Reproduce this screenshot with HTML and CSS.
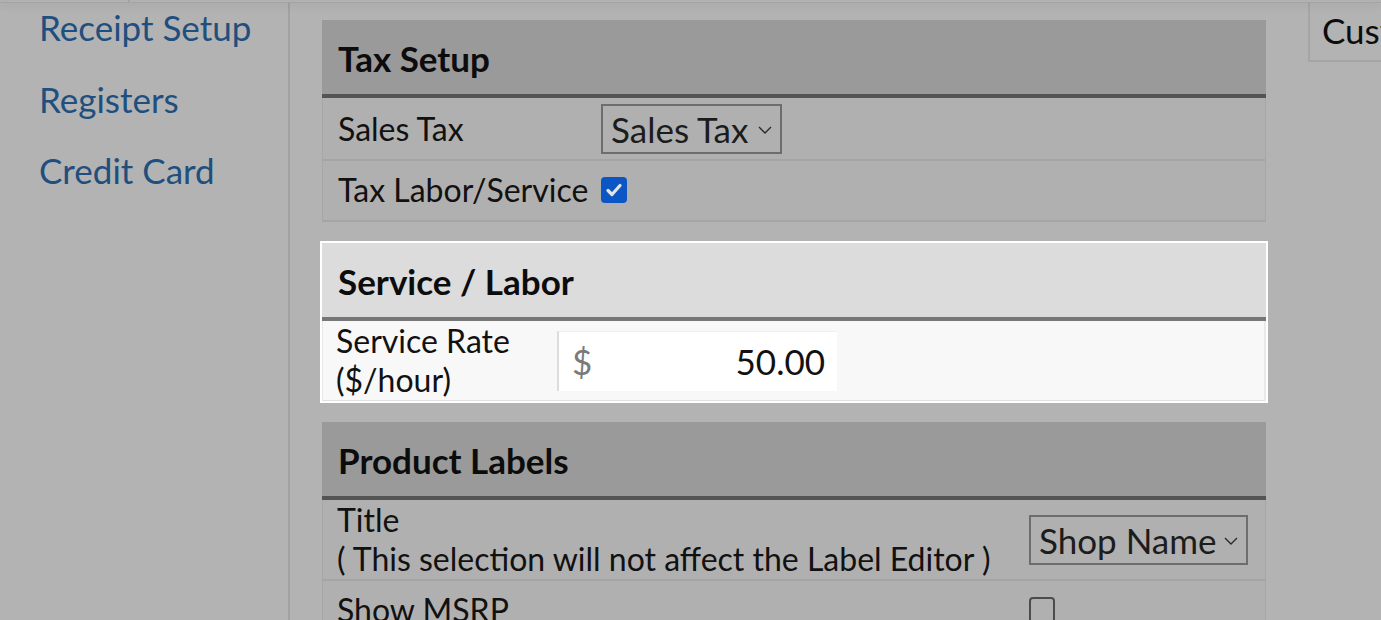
FILE: index.html
```html
<!DOCTYPE html>
<html lang="en">
<head>
<meta charset="utf-8">
<title>Settings</title>
<link rel="stylesheet" href="styles.css">
</head>
<body>
<div class="topbar"><div class="topbar-left"></div></div>
<div class="layout">
  <nav class="sidebar">
    <a class="nav-link" href="#">Receipt Setup</a>
    <a class="nav-link" href="#">Registers</a>
    <a class="nav-link" href="#">Credit Card</a>
  </nav>
  <main class="content">
    <div class="panels">
      <section class="panel">
        <div class="panel-header">Tax Setup</div>
        <div class="row row-tax row-select">
          <div class="label">Sales Tax</div>
          <div class="select select-tax"><span>Sales Tax</span><svg class="chev" width="14" height="8" viewBox="0 0 14 8"><polyline points="1,1 7,7 13,1" fill="none" stroke="#2a2a2a" stroke-width="1.4"/></svg></div>
        </div>
        <div class="row row-tax row-check">
          <div class="label">Tax Labor/Service</div>
          <span class="checkbox checked"><svg width="26" height="26" viewBox="0 0 26 26"><polyline points="7,13.5 11,17.5 19,8.5" fill="none" stroke="#e4e4e4" stroke-width="3.2" stroke-linecap="round" stroke-linejoin="round"/></svg></span>
        </div>
      </section>

      <section class="panel panel-focus">
        <div class="panel-header">Service / Labor</div>
        <div class="row row-service">
          <div class="label label-rate">Service Rate ($/hour)</div>
          <div class="input-group"><span class="addon">$</span><span class="value">50.00</span></div>
        </div>
      </section>

      <section class="panel">
        <div class="panel-header">Product Labels</div>
        <div class="row row-labels row-title">
          <div class="label">Title<br>( This selection will not affect the Label Editor )</div>
          <div class="select select-shop"><span>Shop Name</span><svg class="chev" width="14" height="8" viewBox="0 0 14 8"><polyline points="1,1 7,7 13,1" fill="none" stroke="#2a2a2a" stroke-width="1.4"/></svg></div>
        </div>
        <div class="row row-labels row-msrp">
          <div class="label">Show MSRP</div>
          <span class="checkbox"></span>
        </div>
      </section>
    </div>
    <div class="side-card">Cust</div>
  </main>
</div>
</body>
</html>
```

FILE: styles.css
```css
* { box-sizing: border-box; }

html, body {
  margin: 0;
  height: 620px;
  overflow: hidden;
}

body {
  background: #b3b3b3;
  font-family: Lato, "Open Sans", "Liberation Sans", sans-serif;
  font-size: 32px;
  line-height: 1.2;
  color: #111;
}

.topbar {
  position: relative;
  z-index: 2;
  height: 3px;
  background: #b1b1b1;
  border-bottom: 1px solid #a4a4a4;
  box-shadow: 0 2px 8px rgba(0, 0, 0, 0.12);
}

.topbar-left {
  width: 130px;
  height: 2px;
  border-right: 2px solid #a2a2a2;
}

.layout {
  display: flex;
  height: 617px;
}

.sidebar {
  width: 290px;
  flex: none;
  border-right: 2px solid #a2a2a2;
  padding: 3px 0 0 39px;
  display: flex;
  flex-direction: column;
  align-items: flex-start;
  gap: 29.5px;
}

.nav-link {
  color: #1f4f7e;
  text-decoration: none;
  font-size: 35px;
  line-height: 42px;
}

.content {
  display: flex;
  align-items: flex-start;
  padding-left: 32px;
}

.panels {
  width: 944px;
  flex: none;
  padding-top: 17px;
}

.panel {
  margin-bottom: 21px;
}

.panel-header {
  height: 78px;
  padding: 1px 0 0 16px;
  display: flex;
  align-items: center;
  background: #9a9a9a;
  border-bottom: 4px solid #545454;
  font-weight: 700;
  font-size: 35px;
  line-height: 42px;
  color: #0c0c0c;
}

.row {
  display: grid;
  align-items: center;
  background: #b0b0b0;
  border-left: 1px solid #a7a7a7;
  border-right: 1px solid #a7a7a7;
  border-bottom: 2px solid #a5a5a5;
}

.row-tax {
  grid-template-columns: 263px auto;
  justify-items: start;
  padding-left: 15px;
}

.row-select { padding-top: 6px; padding-bottom: 5px; }
.row-check { padding-top: 10px; padding-bottom: 11px; }

.select {
  height: 50px;
  border: 2px solid #6d6d6d;
  display: flex;
  align-items: center;
  justify-content: space-between;
  padding: 0 8px 0 8px;
  color: #1c1c1c;
  font-size: 35px;
  line-height: 42px;
}

.select-tax { width: 181px; }
.select-shop { width: 219px; }

.chev { flex: none; margin-top: 2px; }

.checkbox {
  display: block;
  width: 26px;
  height: 26px;
  border-radius: 4px;
  border: 2px solid #4c4c4c;
}

.checkbox.checked {
  background: #0b56c4;
  border: 0;
}

.checkbox svg { display: block; }

/* focused (highlighted) section */
.panel-focus {
  outline: 2px solid #ffffff;
}

.panel-focus .panel-header {
  background: #dcdcdc;
  border-bottom-color: #777777;
}

.panel-focus .row {
  background: #f8f8f8;
  border-left-color: #e8e8e8;
  border-right: 2px solid #e9e9e9;
  border-bottom: 1px solid #e0e0e0;
}

.row-service {
  grid-template-columns: 212px 280px;
  column-gap: 9px;
  padding: 1px 14px 1px 13px;
}

.input-group {
  height: 60px;
  display: flex;
  align-items: center;
  background: #ffffff;
  border-left: 2px solid #dcdcdc;
  border-top: 1px solid #efefef;
  font-size: 35px;
  line-height: 42px;
}

.addon {
  color: #7a7a7a;
  padding-left: 13px;
}

.value {
  flex: 1;
  text-align: right;
  padding-right: 12px;
}

.row-labels {
  grid-template-columns: 1fr 219px;
  padding-left: 14px;
  padding-right: 17px;
}

.row-title { padding-top: 1px; padding-bottom: 1px; }
.row-msrp { padding-top: 10px; padding-bottom: 10px; }

.side-card {
  margin-left: 42px;
  width: 220px;
  height: 59px;
  flex: none;
  border-left: 2px solid #a5a5a5;
  border-bottom: 2px solid #a5a5a5;
  padding: 6px 0 0 12px;
  font-size: 35px;
  line-height: 42px;
  color: #0c0c0c;
}
```
